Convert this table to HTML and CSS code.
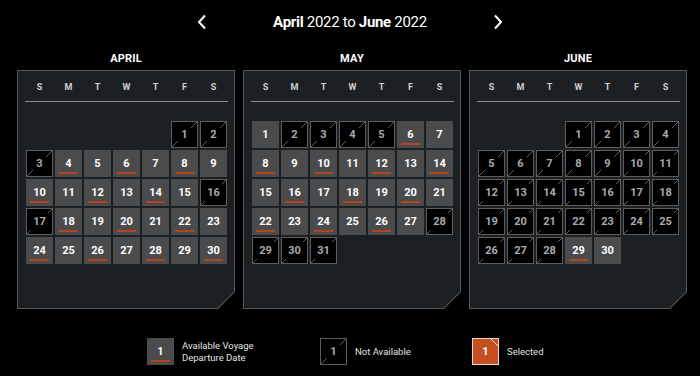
FILE: index.html
```html
<!DOCTYPE html>
<html>
<head>
<meta charset="utf-8">
<link rel="stylesheet" href="styles.css">
</head>
<body>
<div class="page">
  <div class="top">
    <svg class="arrow" width="10" height="16" viewBox="0 0 10 16"><polyline points="8,1.5 2,8 8,14.5" fill="none" stroke="#fff" stroke-width="2"/></svg>
    <div class="range"><b>April</b> 2022 to <b>June</b> 2022</div>
    <svg class="arrow" width="10" height="16" viewBox="0 0 10 16"><polyline points="2,1.5 8,8 2,14.5" fill="none" stroke="#fff" stroke-width="2"/></svg>
  </div>

  <div class="months">
    <div class="month">
      <div class="mtitle">APRIL</div>
      <div class="panel"><div class="inner">
        <div class="wk"><span>S</span><span>M</span><span>T</span><span>W</span><span>T</span><span>F</span><span>S</span></div>
        <div class="rule"></div>
        <div class="grid">
          <div class="d n c6"><span>1</span></div><div class="d n"><span>2</span></div>
          <div class="d n"><span>3</span></div><div class="d a u">4</div><div class="d a">5</div><div class="d a u">6</div><div class="d a">7</div><div class="d a u">8</div><div class="d a">9</div>
          <div class="d a u">10</div><div class="d a">11</div><div class="d a u">12</div><div class="d a">13</div><div class="d a u">14</div><div class="d a">15</div><div class="d n"><span>16</span></div>
          <div class="d n"><span>17</span></div><div class="d a u">18</div><div class="d a">19</div><div class="d a u">20</div><div class="d a">21</div><div class="d a u">22</div><div class="d a">23</div>
          <div class="d a u">24</div><div class="d a">25</div><div class="d a u">26</div><div class="d a">27</div><div class="d a u">28</div><div class="d a">29</div><div class="d a u">30</div>
        </div>
      </div></div>
    </div>

    <div class="month">
      <div class="mtitle">MAY</div>
      <div class="panel"><div class="inner">
        <div class="wk"><span>S</span><span>M</span><span>T</span><span>W</span><span>T</span><span>F</span><span>S</span></div>
        <div class="rule"></div>
        <div class="grid">
          <div class="d a">1</div><div class="d n"><span>2</span></div><div class="d n"><span>3</span></div><div class="d n"><span>4</span></div><div class="d n"><span>5</span></div><div class="d a u">6</div><div class="d a">7</div>
          <div class="d a u">8</div><div class="d a">9</div><div class="d a u">10</div><div class="d a">11</div><div class="d a u">12</div><div class="d a">13</div><div class="d a u">14</div>
          <div class="d a">15</div><div class="d a u">16</div><div class="d a">17</div><div class="d a u">18</div><div class="d a">19</div><div class="d a u">20</div><div class="d a">21</div>
          <div class="d a u">22</div><div class="d a">23</div><div class="d a u">24</div><div class="d a">25</div><div class="d a u">26</div><div class="d a">27</div><div class="d n"><span>28</span></div>
          <div class="d n"><span>29</span></div><div class="d n"><span>30</span></div><div class="d n"><span>31</span></div>
        </div>
      </div></div>
    </div>

    <div class="month">
      <div class="mtitle">JUNE</div>
      <div class="panel"><div class="inner">
        <div class="wk"><span>S</span><span>M</span><span>T</span><span>W</span><span>T</span><span>F</span><span>S</span></div>
        <div class="rule"></div>
        <div class="grid">
          <div class="d n c4"><span>1</span></div><div class="d n"><span>2</span></div><div class="d n"><span>3</span></div><div class="d n"><span>4</span></div>
          <div class="d n"><span>5</span></div><div class="d n"><span>6</span></div><div class="d n"><span>7</span></div><div class="d n"><span>8</span></div><div class="d n"><span>9</span></div><div class="d n"><span>10</span></div><div class="d n"><span>11</span></div>
          <div class="d n"><span>12</span></div><div class="d n"><span>13</span></div><div class="d n"><span>14</span></div><div class="d n"><span>15</span></div><div class="d n"><span>16</span></div><div class="d n"><span>17</span></div><div class="d n"><span>18</span></div>
          <div class="d n"><span>19</span></div><div class="d n"><span>20</span></div><div class="d n"><span>21</span></div><div class="d n"><span>22</span></div><div class="d n"><span>23</span></div><div class="d n"><span>24</span></div><div class="d n"><span>25</span></div>
          <div class="d n"><span>26</span></div><div class="d n"><span>27</span></div><div class="d n"><span>28</span></div><div class="d a u">29</div><div class="d a">30</div>
        </div>
      </div></div>
    </div>
  </div>

  <div class="legend">
    <div class="item i1"><div class="d a u">1</div><div class="ltext">Available Voyage<br>Departure Date</div></div>
    <div class="item i2"><div class="d n"><span>1</span></div><div class="ltext">Not Available</div></div>
    <div class="item"><div class="d sel">1</div><div class="ltext">Selected</div></div>
  </div>
</div>
</body>
</html>
```

FILE: styles.css
```css
* { box-sizing: border-box; }
html, body { margin: 0; padding: 0; background: #000; }
body { font-family: Roboto, "DejaVu Sans", sans-serif; color: #fff; }
.page { width: 700px; height: 376px; overflow: hidden; }

.top {
  height: 42px;
  display: flex;
  align-items: center;
  justify-content: center;
  gap: 66px;
  padding-top: 1px;
}
.arrow { display: block; }
.range { font-size: 15px; letter-spacing: -0.3px; color: #fff; }
.range b { font-weight: 700; }

.months {
  display: flex;
  gap: 8px;
  padding-left: 17px;
}
.month { width: 218px; }
.mtitle {
  height: 28px;
  display: flex;
  align-items: center;
  justify-content: center;
  padding-top: 4px;
  font-size: 11px;
  font-weight: 700;
  letter-spacing: 0.2px;
}
.panel {
  height: 239px;
  padding: 1px;
  background: #56595c;
  clip-path: polygon(0 0, 100% 0, 100% calc(100% - 17px), calc(100% - 17px) 100%, 0 100%);
}
.inner {
  height: 100%;
  background: #1d2023;
  clip-path: polygon(0 0, 100% 0, 100% calc(100% - 16.4px), calc(100% - 16.4px) 100%, 0 100%);
  padding: 8px 0 0 8px;
}
.wk {
  display: grid;
  grid-template-columns: repeat(7, 27px);
  column-gap: 2px;
  height: 15px;
  align-items: center;
  font-size: 9px;
  font-weight: 700;
  color: #d0d0d0;
}
.wk span { text-align: center; }
.rule {
  width: 203px;
  height: 1px;
  background: #8a8d90;
  margin: 7px 0 0 -1px;
}
.grid {
  margin-top: 19px;
  display: grid;
  grid-template-columns: repeat(7, 27px);
  grid-auto-rows: 27px;
  gap: 2px;
}
.c4 { grid-column-start: 4; }
.c6 { grid-column-start: 6; }

.d {
  position: relative;
  width: 27px;
  height: 27px;
  display: flex;
  align-items: center;
  justify-content: center;
  font-size: 11px;
  font-weight: 700;
}
.a { background: #4a4b4c; color: #fff; }
.u::after {
  content: "";
  position: absolute;
  left: 4px;
  right: 4px;
  bottom: 3px;
  height: 2px;
  background: #b4441d;
}
.n {
  border: 1px solid #5b5d5f;
  background: linear-gradient(to bottom right, transparent calc(50% - 0.6px), #5f6163 50%, transparent calc(50% + 0.6px)), #000;
  color: #a9abad;
}
.n span { background: #000; padding: 3px 3px; line-height: 11px; }
.sel {
  background: #c54f1e;
  border: 1px solid #e9d6cc;
  color: #fff;
}
.sel::after {
  content: "";
  position: absolute;
  top: 0;
  right: 0;
  width: 7px;
  height: 7px;
  background: linear-gradient(to bottom left, transparent calc(50% - 0.6px), #f2e4dc 50%, transparent calc(50% + 0.6px));
}

.legend {
  margin-top: 29px;
  display: flex;
  align-items: center;
  padding-left: 147px;
}
.item { display: flex; align-items: center; gap: 8px; }
.i1 { width: 173px; }
.i2 { width: 152px; }
.ltext { font-size: 9.5px; line-height: 12px; color: #e2e2e2; }
```
